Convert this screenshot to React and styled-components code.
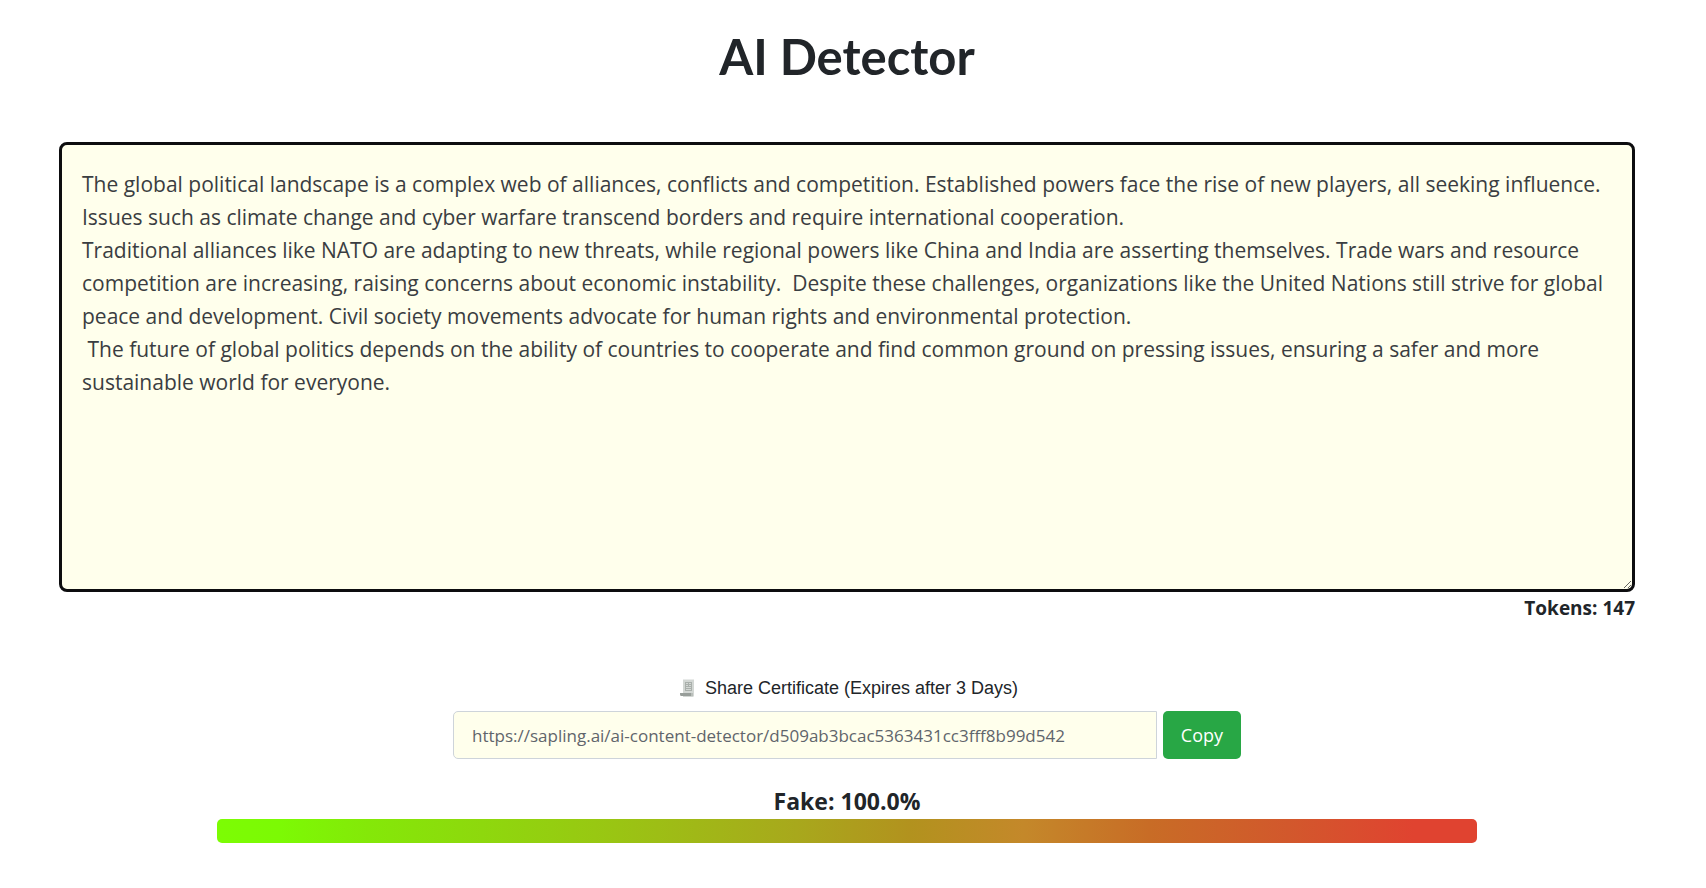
import React, { useState } from 'react';
import styled, { createGlobalStyle } from 'styled-components';

const SAMPLE_TEXT = [
	'The global political landscape is a complex web of alliances, conflicts and competition. Established powers face the rise of new players, all seeking influence. Issues such as climate change and cyber warfare transcend borders and require international cooperation.',
	'Traditional alliances like NATO are adapting to new threats, while regional powers like China and India are asserting themselves. Trade wars and resource competition are increasing, raising concerns about economic instability.  Despite these challenges, organizations like the United Nations still strive for global peace and development. Civil society movements advocate for human rights and environmental protection.',
	' The future of global politics depends on the ability of countries to cooperate and find common ground on pressing issues, ensuring a safer and more sustainable world for everyone.',
].join('\n');

const SHARE_URL =
	'https://sapling.ai/ai-content-detector/d509ab3bcac5363431cc3fff8b99d542';

const GlobalStyle = createGlobalStyle`
	*, *::before, *::after {
		box-sizing: border-box;
	}
	body {
		margin: 0;
		background-color: #fff;
		color: #212529;
		font-family: 'Open Sans', 'Noto Sans', sans-serif;
	}
`;

const Page = styled.main`
	display: flex;
	flex-direction: column;
	align-items: center;
	padding: 24px 71px 40px 59px;
`;

const Title = styled.h1`
	margin: 0 0 54px;
	font-family: Lato, sans-serif;
	font-size: 49px;
	font-weight: 700;
	line-height: 64px;
`;

const Editor = styled.textarea`
	display: block;
	width: 100%;
	height: 450px;
	padding: 23px 20px;
	border: 3px solid #0d0d0f;
	border-radius: 8px;
	outline: none;
	background-color: #ffffec;
	color: #3a3d41;
	font-family: inherit;
	font-size: 21px;
	line-height: 33px;
	resize: vertical;
`;

const Tokens = styled.p`
	align-self: flex-end;
	margin: 2px 0 0;
	font-size: 19px;
	font-weight: 700;
	line-height: 28px;
`;

const Share = styled.form`
	width: 50%;
	margin-top: 52px;
`;

const ShareLabel = styled.label`
	display: flex;
	align-items: center;
	justify-content: center;
	gap: 9px;
	padding-left: 4px;
	font-family: 'Liberation Sans', Arial, sans-serif;
	font-size: 18px;
	line-height: 28px;
`;

const ShareRow = styled.div`
	display: flex;
	gap: 6px;
	margin-top: 9px;
`;

const ShareInput = styled.input`
	flex: 1;
	min-width: 0;
	height: 48px;
	padding: 0 18px;
	border: 1px solid #ced4da;
	border-radius: 5px 0 0 5px;
	outline: none;
	background-color: #ffffec;
	color: #5f656b;
	font-family: inherit;
	font-size: 17px;
`;

const CopyButton = styled.button`
	height: 48px;
	padding: 0 18px;
	border: 0;
	border-radius: 5px;
	background-color: #28a745;
	color: #fff;
	font-family: inherit;
	font-size: 18px;
	cursor: pointer;
`;

const Score = styled.p`
	margin: 25px 0 0;
	font-size: 23px;
	font-weight: 700;
	line-height: 35px;
`;

const ScoreBar = styled.div`
	width: 80%;
	height: 24px;
	border-radius: 5px;
	background-image: linear-gradient(
		to right,
		#7cfc04 0%,
		#7cfa04 5%,
		#84e808 12%,
		#98c812 30%,
		#a8a81c 46%,
		#b2921e 55%,
		#c4882a 64%,
		#c86c26 74%,
		#d2582c 85%,
		#e04330 95%,
		#e04330 100%
	);
`;

const CertificateIcon = () => (
	<svg width="16" height="20" viewBox="0 0 16 20" aria-hidden="true">
		<path
			d="M3 1l1 1 1-1 1 1 1-1 1 1 1-1 1 1 1-1 1 1 1-1 1 1v16l-1 1H3z"
			fill="#d3d7d4"
		/>
		<path
			d="M5 4.5h7M5 6.5h7M5 8.5h7M5 10.5h7M5 12.5h7M5.5 4v9M8.5 5v4M11.5 4v9"
			stroke="#a9afab"
			fill="none"
		/>
		<path d="M0 15h11v3H1c-1 0-1-2-1-3z" fill="#989e9a" />
		<path d="M11 15h2v3h-2z" fill="#b9beba" />
	</svg>
);

const App = () => {
	const [text, setText] = useState(SAMPLE_TEXT);

	const handleCopy = event => {
		event.preventDefault();
		if (navigator.clipboard) {
			navigator.clipboard.writeText(SHARE_URL);
		}
	};

	return (
		<>
			<GlobalStyle />
			<Page>
				<Title>AI Detector</Title>
				<Editor
					aria-label="Text to check"
					spellCheck={false}
					value={text}
					onChange={event => setText(event.target.value)}
				/>
				<Tokens>Tokens: 147</Tokens>
				<Share onSubmit={handleCopy}>
					<ShareLabel htmlFor="share-url">
						<CertificateIcon />
						Share Certificate (Expires after 3 Days)
					</ShareLabel>
					<ShareRow>
						<ShareInput id="share-url" type="text" value={SHARE_URL} readOnly />
						<CopyButton type="submit">Copy</CopyButton>
					</ShareRow>
				</Share>
				<Score id="score">Fake: 100.0%</Score>
				<ScoreBar
					role="meter"
					aria-labelledby="score"
					aria-valuemin={0}
					aria-valuemax={100}
					aria-valuenow={100}
				/>
			</Page>
		</>
	);
};

export default App;
